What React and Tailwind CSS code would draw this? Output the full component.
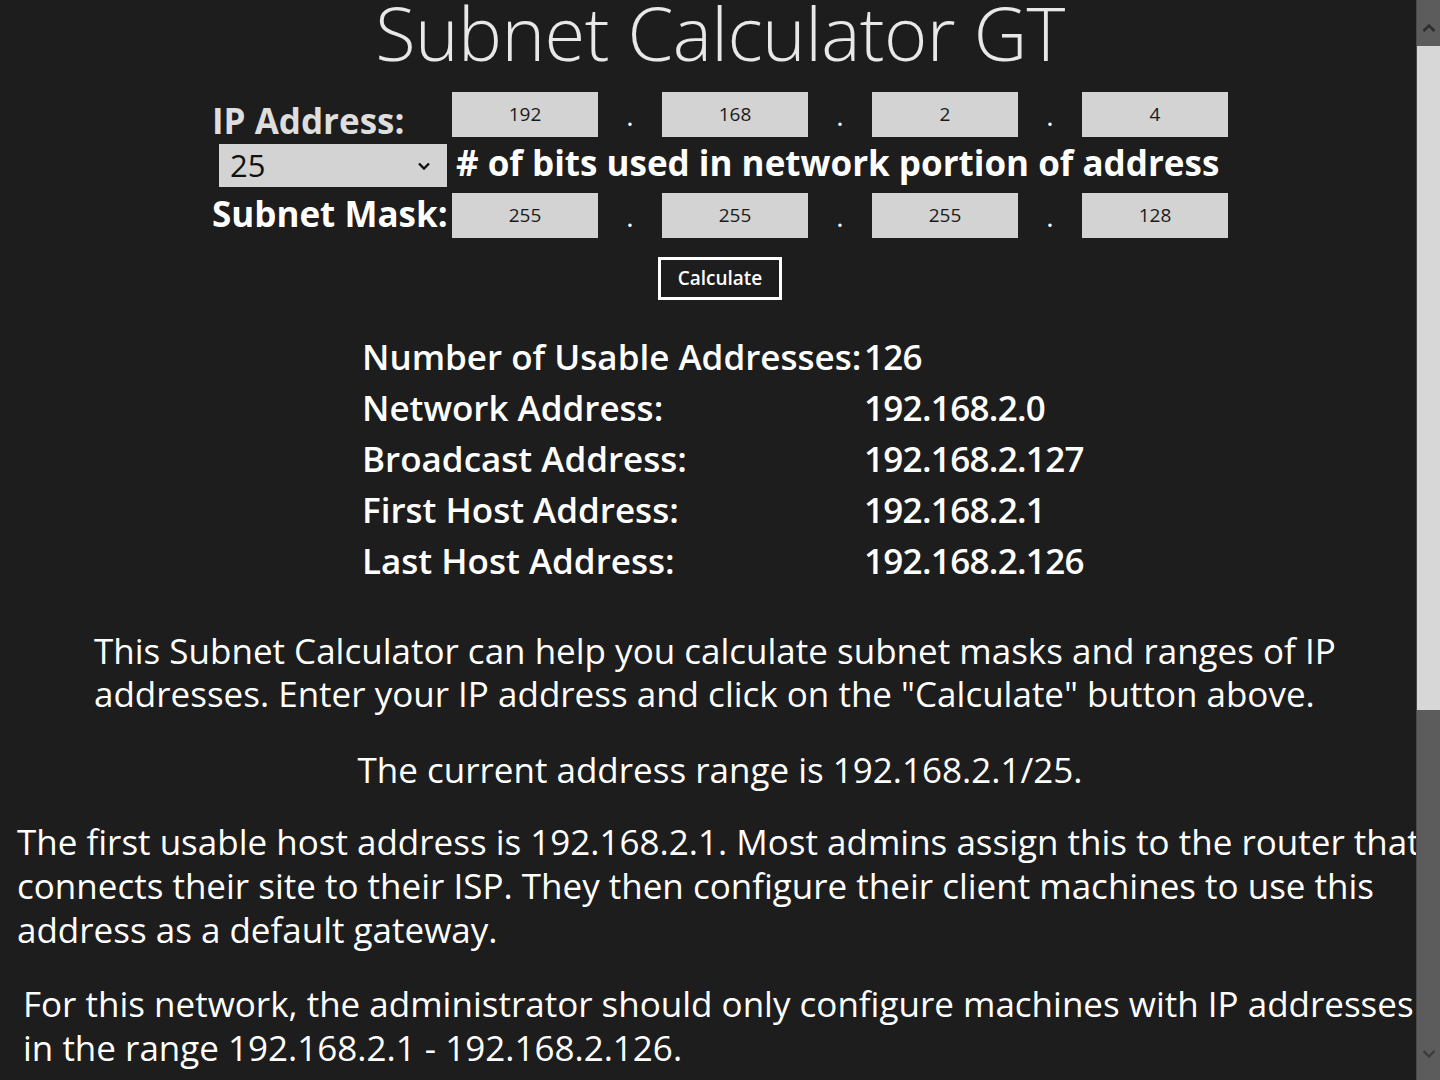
import React from "react";

const font = { fontFamily: '"Open Sans", "Noto Sans", sans-serif' };

// one row of four octet boxes separated by dots
const OctetRow = ({ values }) => (
  <div className="flex items-stretch h-[45px]">
    {values.map((v, i) => (
      <React.Fragment key={i}>
        {i > 0 && (
          <div className="w-[64px] flex items-end justify-center pb-[8px] text-white text-[28px] leading-none">.</div>
        )}
        <div className="w-[146px] h-[45px] bg-[#d3d3d3] flex items-center justify-center text-[19px] text-[#1a1a1a]">
          {v}
        </div>
      </React.Fragment>
    ))}
  </div>
);

const results = [
  ["Number of Usable Addresses:", "126"],
  ["Network Address:", "192.168.2.0"],
  ["Broadcast Address:", "192.168.2.127"],
  ["First Host Address:", "192.168.2.1"],
  ["Last Host Address:", "192.168.2.126"],
];

const Scrollbar = () => (
  <div className="absolute top-0 right-0 w-[24px] h-[1080px] bg-[#5c5c5c] border-l border-[#4a4a4a] flex flex-col">
    <div className="h-[46px] flex items-center justify-center">
      <svg width="14" height="10" viewBox="0 0 14 10" className="mt-[10px]">
        <path d="M1.5 8 L7 2.5 L12.5 8" stroke="#2e2e2e" strokeWidth="2.6" fill="none" />
      </svg>
    </div>
    <div className="h-[664px] bg-[#d7d7d7]" />
    <div className="flex-1" />
    <div className="h-[46px] flex items-center justify-center">
      <svg width="14" height="10" viewBox="0 0 14 10" className="mb-[6px]">
        <path d="M1.5 2 L7 7.5 L12.5 2" stroke="#3a3a3a" strokeWidth="2.2" fill="none" />
      </svg>
    </div>
  </div>
);

export default function App() {
  return (
    <div className="relative w-[1440px] h-[1080px] overflow-hidden bg-[#1d1d1d] text-white" style={font}>
      <h1 className="text-center font-light text-[74px] leading-[66px] text-[#e8e8e8] tracking-[-0.6px]">
        Subnet Calculator GT
      </h1>

      <div className="ml-[212px] mt-[26px] flex flex-col">
        <div className="flex items-end h-[45px]">
          <div className="w-[240px] text-[35px] font-bold text-[#dedede] leading-none -mb-[1px] whitespace-nowrap">IP Address:</div>
          <OctetRow values={["192", "168", "2", "4"]} />
        </div>
        <div className="flex items-center h-[43px] mt-[7px]">
          <div className="ml-[7px] w-[228px] h-[43px] bg-[#d3d3d3] flex items-center justify-between pl-[11px] pr-[16px] text-[#111]">
            <span className="text-[31px] leading-none">25</span>
            <svg width="14" height="10" viewBox="0 0 14 10">
              <path d="M2 2.5 L7 7.5 L12 2.5" stroke="#111" strokeWidth="2.4" fill="none" />
            </svg>
          </div>
          <div className="ml-[9px] text-[35px] font-bold leading-none whitespace-nowrap mb-[7px]">
            # of bits used in network portion of address
          </div>
        </div>
        <div className="flex items-end h-[45px] mt-[6px]">
          <div className="w-[240px] text-[35px] font-bold leading-none mb-[7px] whitespace-nowrap">Subnet Mask:</div>
          <OctetRow values={["255", "255", "255", "128"]} />
        </div>
      </div>

      <div className="flex justify-center mt-[19px]">
        <button className="w-[124px] h-[43px] border-[3px] border-white text-[19px] font-semibold text-white flex items-center justify-center">
          Calculate
        </button>
      </div>

      <div className="ml-[362px] mt-[31px] flex flex-col">
        {results.map(([label, value]) => (
          <div key={label} className="flex h-[51px] items-center text-[35px] font-semibold leading-none">
            <div className="w-[502px] whitespace-nowrap">{label}</div>
            <div className="whitespace-nowrap tracking-[-0.7px]">{value}</div>
          </div>
        ))}
      </div>

      <div className="mt-[43px] text-[35px] leading-[43px]">
        <p className="ml-[94px] whitespace-nowrap">
          This Subnet Calculator can help you calculate subnet masks and ranges of IP
          <br />
          addresses. Enter your IP address and click on the "Calculate" button above.
        </p>
        <p className="mt-[33px] text-center whitespace-nowrap">The current address range is 192.168.2.1/25.</p>
        <p className="mt-[29px] ml-[17px] whitespace-nowrap leading-[44px]">
          The first usable host address is 192.168.2.1. Most admins assign this to the router that
          <br />
          connects their site to their ISP. They then configure their client machines to use this
          <br />
          address as a default gateway.
        </p>
        <p className="mt-[30px] ml-[23px] whitespace-nowrap leading-[44px]">
          For this network, the administrator should only configure machines with IP addresses
          <br />
          in the range 192.168.2.1 - 192.168.2.126.
        </p>
      </div>

      <Scrollbar />
    </div>
  );
}
